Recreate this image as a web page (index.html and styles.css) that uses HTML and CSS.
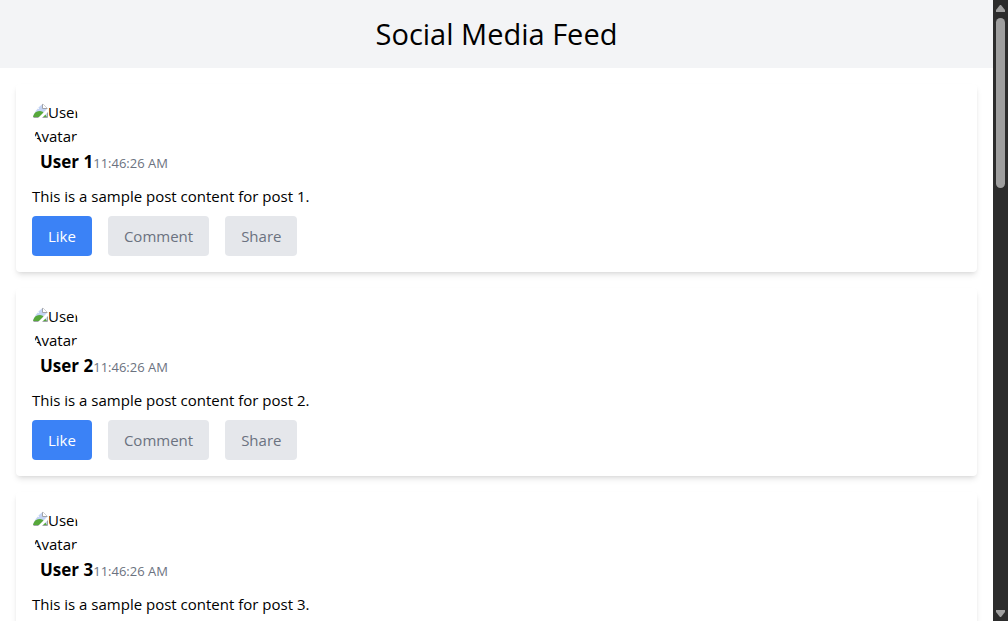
FILE: index.html
```html
<!DOCTYPE html>
<html lang="en">
<head>
<meta charset="utf-8">
<meta name="viewport" content="width=device-width, initial-scale=1">
<title>Social Media Feed</title>
<link rel="stylesheet" href="styles.css">
</head>
<body>
<svg class="symbols" aria-hidden="true">
  <symbol id="picture" viewBox="0 0 16 16">
    <path d="M1 1h9l5 5v9H1z" fill="#c3d3f3"/>
    <path d="M1.500 15V1.500H10.500L15.500 6.500V15.500H1.500" fill="none" stroke="#a0a3a8"/>
    <path d="M10.500 1.500v5h5" fill="#fff" stroke="#a0a3a8"/>
    <path d="M3 7c0-2.500 4-2.500 4 0z" fill="#fff"/>
    <path d="M1 15v-2c2-3 4-4 7-4 3 0 5 3 7 6z" fill="#57a83b"/>
    <path d="M6 16L16 6v4l-6 6z" fill="#fff"/>
  </symbol>
</svg>
<div class="app">
  <div class="page">
    <header class="header"><h1 class="title">Social Media Feed</h1></header>
    <main class="feed">
      <article class="post">
        <div class="avatar"><div class="avatar-line"><svg class="picture" aria-hidden="true"><use href="#picture"/></svg>User</div><div class="avatar-line">Avatar</div></div>
        <div class="byline"><h2 class="name">User 1</h2><time class="time">11:46:26 AM</time></div>
        <p class="content">This is a sample post content for post 1.</p>
        <div class="actions"><button class="button primary">Like</button><button class="button">Comment</button><button class="button">Share</button></div>
      </article>
      <article class="post">
        <div class="avatar"><div class="avatar-line"><svg class="picture" aria-hidden="true"><use href="#picture"/></svg>User</div><div class="avatar-line">Avatar</div></div>
        <div class="byline"><h2 class="name">User 2</h2><time class="time">11:46:26 AM</time></div>
        <p class="content">This is a sample post content for post 2.</p>
        <div class="actions"><button class="button primary">Like</button><button class="button">Comment</button><button class="button">Share</button></div>
      </article>
      <article class="post">
        <div class="avatar"><div class="avatar-line"><svg class="picture" aria-hidden="true"><use href="#picture"/></svg>User</div><div class="avatar-line">Avatar</div></div>
        <div class="byline"><h2 class="name">User 3</h2><time class="time">11:46:26 AM</time></div>
        <p class="content">This is a sample post content for post 3.</p>
        <div class="actions"><button class="button primary">Like</button><button class="button">Comment</button><button class="button">Share</button></div>
      </article>
    </main>
  </div>
  <div class="scrollbar" aria-hidden="true">
    <svg class="arrow" viewBox="0 0 9 7"><path d="M4 0h1l4 5v2H0V5z"/></svg>
    <div class="track"><div class="thumb"></div></div>
    <svg class="arrow" viewBox="0 0 9 7"><path d="M4 7h1l4-5V0H0v2z"/></svg>
  </div>
</div>
</body>
</html>
```
FILE: styles.css
```css
* { box-sizing: border-box; margin: 0; }
body {
  background: #fff;
  color: #000;
  font: 15px/24px "Segoe UI", "Open Sans", "Noto Sans", sans-serif;
}
.symbols { display: none; }
.app { display: flex; height: 100vh; }
.page {
  flex: 1;
  min-width: 0;
  overflow-y: auto;
  scrollbar-width: none;
}
.header { padding: 16px; background: #f3f4f6; text-align: center; }
.title { font-size: 29px; line-height: 36px; font-weight: 400; }
.feed { display: flex; flex-direction: column; gap: 16px; padding: 16px; }
.post {
  padding: 16px;
  border-radius: 4px;
  background: #fff;
  box-shadow: 0 4px 6px -1px rgba(0, 0, 0, .1), 0 2px 4px -2px rgba(0, 0, 0, .1);
}
.avatar { width: 48px; height: 48px; border-radius: 50%; overflow: hidden; }
.avatar-line { display: flex; align-items: flex-start; white-space: nowrap; }
.picture { flex: none; width: 16px; height: 16px; margin-top: 2px; }
.byline { display: flex; align-items: baseline; margin-bottom: 8px; padding-left: 8px; }
.name { font-size: 17px; line-height: 28px; font-weight: 700; }
.time { font-size: 13px; line-height: 20px; color: #6b7280; }
.content { margin-bottom: 8px; }
.actions { display: flex; gap: 16px; }
.button {
  padding: 8px 16px;
  border: 0;
  border-radius: 4px;
  background: #e5e7eb;
  color: #6b7280;
  font: inherit;
}
.primary { background: #3b82f6; color: #fff; }
.scrollbar {
  display: flex;
  flex-direction: column;
  align-items: center;
  gap: 5px;
  width: 15px;
  padding: 5px 0 4px;
  background: #2c2c2c;
}
.arrow { width: 9px; height: 7px; fill: #9f9f9f; }
.track { flex: 1; padding-top: 1px; }
.thumb { width: 9px; height: 29%; border-radius: 5px; background: #9f9f9f; }
```
